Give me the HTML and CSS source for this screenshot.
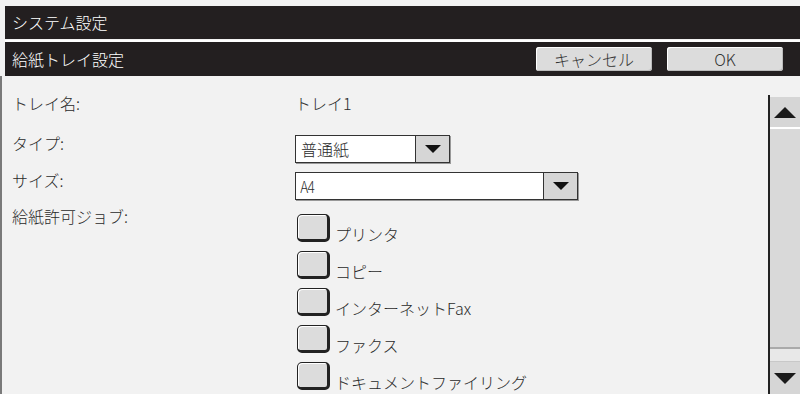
FILE: index.html
```html
<!DOCTYPE html>
<html>
<head>
  <meta charset="utf-8">
  <link rel="stylesheet" href="styles.css">
</head>
<body>
  <div class="screen">
    <div class="titlebar">システム設定</div>
    <div class="titlebar sub">
      <span>給紙トレイ設定</span>
      <div class="actions">
        <button class="btn">キャンセル</button>
        <button class="btn">OK</button>
      </div>
    </div>

    <div class="panel">
      <div class="form">
        <div class="row row-name">
          <div class="label">トレイ名:</div>
          <div class="value">トレイ1</div>
        </div>
        <div class="row row-type">
          <div class="label">タイプ:</div>
          <div class="select select-type">
            <div class="select-text">普通紙</div>
            <div class="select-arrow"><span class="tri-down"></span></div>
          </div>
        </div>
        <div class="row row-size">
          <div class="label">サイズ:</div>
          <div class="select select-size">
            <div class="select-text narrow">A4</div>
            <div class="select-arrow"><span class="tri-down"></span></div>
          </div>
        </div>
        <div class="row row-jobs">
          <div class="label">給紙許可ジョブ:</div>
          <div class="checks">
            <div class="check"><span class="box"></span><span class="check-label">プリンタ</span></div>
            <div class="check"><span class="box"></span><span class="check-label">コピー</span></div>
            <div class="check"><span class="box"></span><span class="check-label">インターネットFax</span></div>
            <div class="check"><span class="box"></span><span class="check-label">ファクス</span></div>
            <div class="check"><span class="box"></span><span class="check-label">ドキュメントファイリング</span></div>
          </div>
        </div>
      </div>

      <div class="scrollbar">
        <div class="scroll-btn"><span class="tri-up big"></span></div>
        <div class="thumb"></div>
        <div class="track"></div>
        <div class="scroll-btn down"><span class="tri-down big"></span></div>
      </div>
    </div>
  </div>
</body>
</html>
```

FILE: styles.css
```css
body {
  margin: 0;
  background-color: #f2f2f2;
  font-family: "Noto Sans CJK JP", sans-serif;
  font-size: 16px;
  font-weight: 300;
  color: #2a2a2a;
}

.screen {
  width: 800px;
  height: 394px;
  padding-top: 6px;
  box-sizing: border-box;
  display: flex;
  flex-direction: column;
  overflow: hidden;
}

.titlebar {
  height: 33px;
  margin-left: 5px;
  padding-left: 7px;
  background-color: #231f20;
  color: #fff;
  line-height: 33px;
  display: flex;
  align-items: center;
}

.titlebar.sub {
  height: 34px;
  margin-top: 3px;
  justify-content: space-between;
  padding-right: 17px;
  box-shadow: 0 -2px 0 #fff;
}

.actions {
  display: flex;
  gap: 15px;
}

.btn {
  width: 116px;
  height: 24px;
  padding: 0;
  border: none;
  border-radius: 3px;
  background-color: #dcdcdc;
  box-shadow: inset 1px 1px 0 #fff, inset -1px -1px 0 #bbb;
  font-family: "Noto Sans CJK JP", sans-serif;
  font-size: 16px;
  font-weight: 300;
  line-height: 24px;
  color: #333;
}

.panel {
  flex: 1;
  display: flex;
  border-left: 2px solid #7a7a7a;
  overflow: hidden;
}

.form {
  flex: 1;
  padding-left: 10px;
}

.row {
  display: flex;
  align-items: flex-start;
}

.label {
  width: 283px;
  line-height: 20px;
}

.value {
  line-height: 20px;
}

.row-name {
  margin-top: 17px;
}

.row-type {
  margin-top: 20px;
}

.row-size {
  margin-top: 7px;
}

.row-jobs {
  margin-top: 6px;
}

.select {
  margin-top: 2px;
  height: 28px;
  box-sizing: border-box;
  display: flex;
  border: 1px solid #333;
  background-color: #fff;
  box-shadow: 1px 1px 0 #999;
}

.select-type {
  width: 155px;
}

.select-size {
  width: 283px;
}

.select-text {
  flex: 1;
  padding-left: 5px;
  line-height: 26px;
}

.narrow {
  letter-spacing: -1px;
  transform: scaleX(0.85);
  transform-origin: left center;
}

.select-arrow {
  width: 33px;
  border-left: 1px solid #333;
  background-color: #d6d6d6;
  display: flex;
  align-items: center;
  justify-content: center;
}

.tri-down {
  width: 0;
  height: 0;
  border-left: 8px solid transparent;
  border-right: 8px solid transparent;
  border-top: 8px solid #111;
}

.tri-up {
  width: 0;
  height: 0;
  border-left: 8px solid transparent;
  border-right: 8px solid transparent;
  border-bottom: 8px solid #111;
}

.tri-up.big {
  border-left-width: 11px;
  border-right-width: 11px;
  border-bottom: 11px solid #1a1a1a;
}

.tri-down.big {
  border-left-width: 11px;
  border-right-width: 11px;
  border-top: 11px solid #1a1a1a;
}

.checks {
  margin-top: 8px;
  padding-left: 2px;
  display: flex;
  flex-direction: column;
  gap: 9px;
}

.check {
  display: flex;
  align-items: flex-end;
}

.box {
  width: 33px;
  height: 28px;
  box-sizing: border-box;
  border: 1px solid #222;
  border-right-width: 3px;
  border-bottom-width: 3px;
  border-radius: 5px;
  background-color: #dcdcdc;
  box-shadow: inset 1px 1px 0 #fff;
}

.check-label {
  margin-left: 5px;
  line-height: 16px;
}

.scrollbar {
  width: 30px;
  margin-top: 19px;
  padding-top: 2px;
  border-left: 2px solid #222;
  display: flex;
  flex-direction: column;
}

.scroll-btn {
  height: 30px;
  background-color: #d6d6d6;
  display: flex;
  align-items: center;
  justify-content: center;
  border-bottom: 2px solid #fff;
}

.scroll-btn.down {
  height: 32px;
  border-bottom: none;
  border-top: 1px solid #c8c8c8;
}

.thumb {
  height: 218px;
  background-color: #d9d9d9;
  border-bottom: 2px solid #aaa;
}

.track {
  flex: 1;
  background-color: #e8e8e8;
}
```
